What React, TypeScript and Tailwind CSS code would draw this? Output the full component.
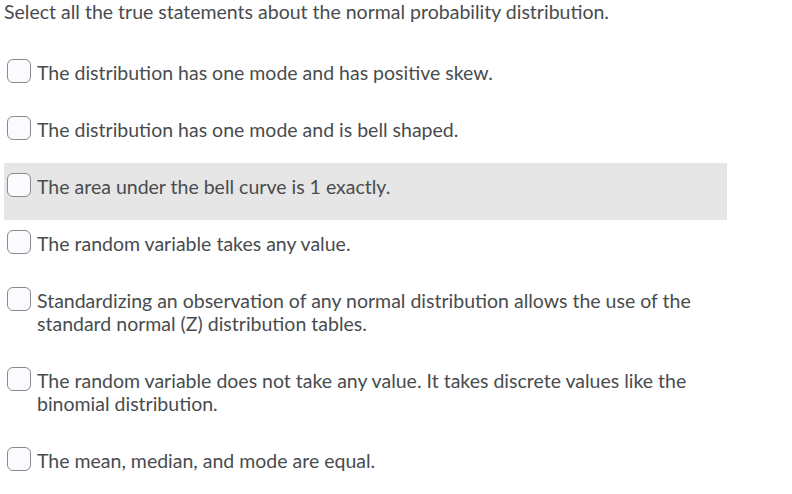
import React from 'react';

const options = [
  'The distribution has one mode and has positive skew.',
  'The distribution has one mode and is bell shaped.',
  'The area under the bell curve is 1 exactly.',
  'The random variable takes any value.',
  'Standardizing an observation of any normal distribution allows the use of the standard normal (Z) distribution tables.',
  'The random variable does not take any value. It takes discrete values like the binomial distribution.',
  'The mean, median, and mode are equal.',
];

export default function App() {
  return (
    <div className="w-[792px] h-[494px] bg-white pl-1 text-[#494c4e] text-[19.5px] leading-[23px] font-['Lato',sans-serif]">
      <p className="mb-[26px]">
        Select all the true statements about the normal probability distribution.
      </p>
      <div className="w-[723px]">
        {options.map((text, i) => (
          <label
            key={i}
            className={`flex items-start pl-[3px] pt-[12px] pb-[22px] ${i === 2 ? 'bg-[#e6e6e6]' : ''}`}
          >
            <span className="mt-[-2px] mr-[6px] h-[24px] w-[24px] shrink-0 rounded-[6px] border border-[#8a8a8a] bg-[#f9fbff]" />
            <span>{text}</span>
          </label>
        ))}
      </div>
    </div>
  );
}
